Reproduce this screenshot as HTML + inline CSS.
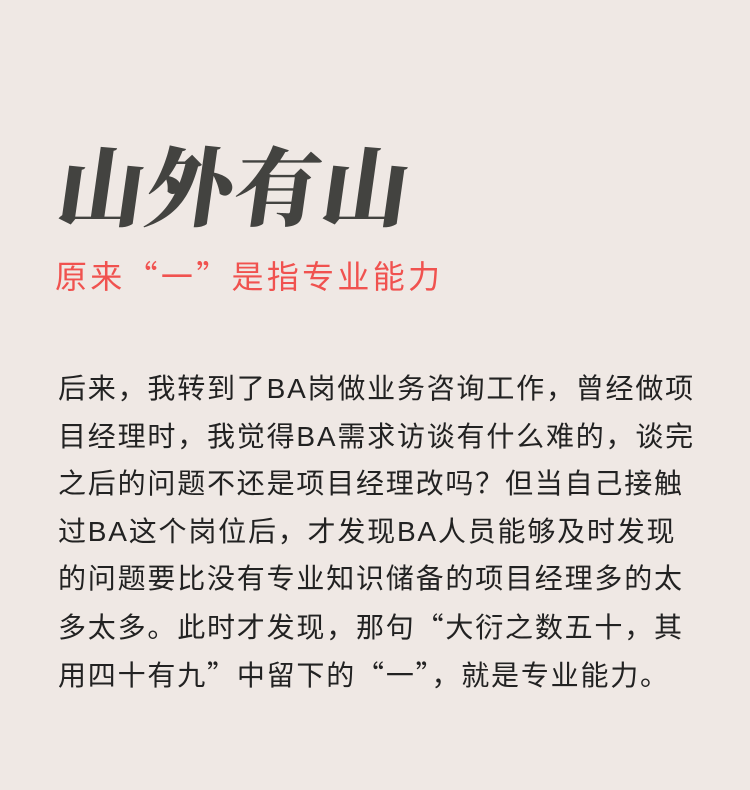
<!DOCTYPE html>
<html><head><meta charset="utf-8"><style>
html,body{margin:0;padding:0;}
body{width:750px;height:790px;background:#efe8e4;position:relative;overflow:hidden;font-family:"Liberation Sans","Noto Sans CJK SC",sans-serif;}
.q{font-family:"Noto Sans CJK SC",sans-serif;}
.t{position:absolute;left:60px;top:120px;font-family:"Noto Serif CJK SC","WenQuanYi Zen Hei",serif;font-weight:900;font-size:86px;color:#434340;letter-spacing:2px;transform:skewX(-8deg);}
.s{position:absolute;left:55px;top:253px;font-size:32px;color:#f0524f;letter-spacing:3.3px;line-height:44px;}
.b{position:absolute;left:58px;top:365px;font-size:28px;color:#222;line-height:47.5px;letter-spacing:1.8px;white-space:nowrap;}
</style></head><body>
<div class="t">山外有山</div>
<div class="s">原来<span class="q">“一”</span>是指专业能力</div>
<div class="b">后来，我转到了BA岗做业务咨询工作，曾经做项<br>目经理时，我觉得BA需求访谈有什么难的，谈完<br>之后的问题不还是项目经理改吗？但当自己接触<br>过BA这个岗位后，才发现BA人员能够及时发现<br>的问题要比没有专业知识储备的项目经理多的太<br>多太多。此时才发现，那句<span class="q">“</span>大衍之数五十，其<br>用四十有九<span class="q">”</span>中留下的<span class="q">“一”</span>，就是专业能力。</div>
</body></html>
